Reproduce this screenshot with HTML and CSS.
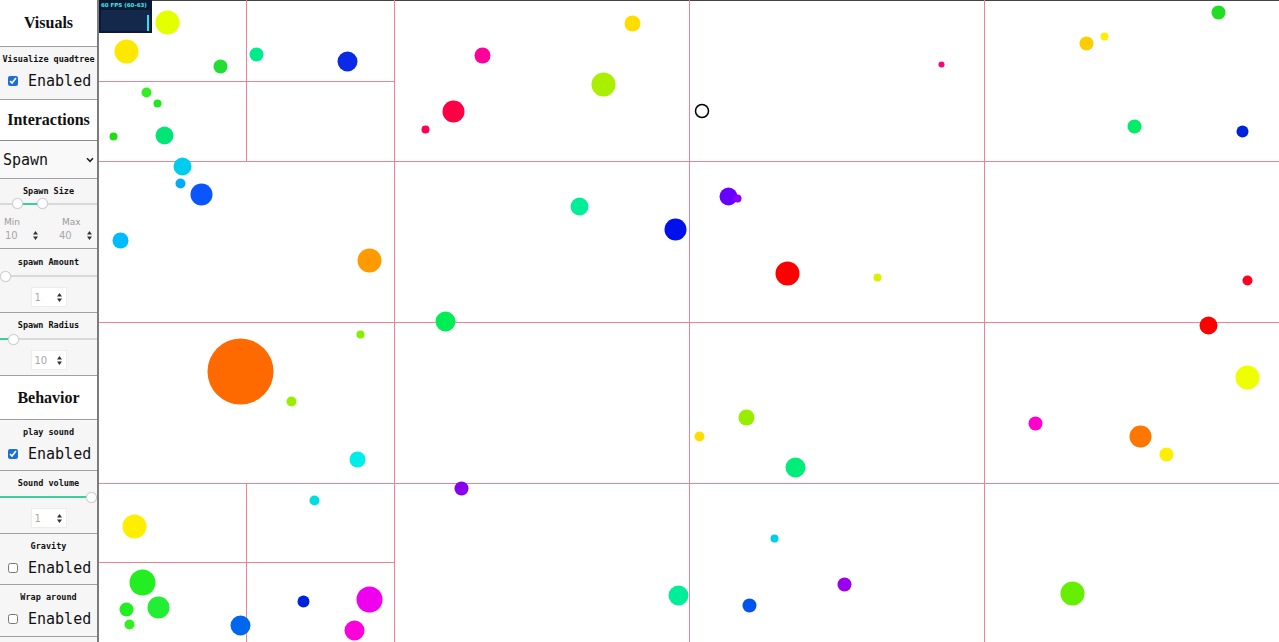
FILE: index.html
```html
<!DOCTYPE html>
<html lang="en">
<head>
<meta charset="utf-8">
<title>Quadtree playground</title>
<link rel="stylesheet" href="styles.css">
</head>
<body>
<div class="app">
  <aside class="panel">
    <h2 class="heading h-visuals">Visuals</h2>
    <section class="ctl ctl-check ctl-first">
      <div class="lbl">Visualize quadtree</div>
      <label class="chk"><input type="checkbox" checked> Enabled</label>
    </section>

    <h2 class="heading h-inter">Interactions</h2>
    <div class="selwrap">
      <select class="sel"><option>Spawn</option></select>
      <svg class="chev" width="8" height="6" viewBox="0 0 8 6"><path d="M1 1.2 L4 4.3 L7 1.2" fill="none" stroke="#222" stroke-width="1.6"/></svg>
    </div>

    <section class="ctl ctl-size">
      <div class="lbl">Spawn Size</div>
      <div class="dual">
        <div class="rail"><div class="rail-fill"></div></div>
        <span class="knob knob-a"></span>
        <span class="knob knob-b"></span>
      </div>
      <div class="mmcap"><span>Min</span><span>Max</span></div>
      <div class="mmrow">
        <div class="num num-wide"><span>10</span><svg width="5" height="9" viewBox="0 0 5 9"><path d="M2.5 0 L5 3.4 H0Z M0 5.6 H5 L2.5 9Z" fill="#333"/></svg></div>
        <div class="num num-wide"><span>40</span><svg width="5" height="9" viewBox="0 0 5 9"><path d="M2.5 0 L5 3.4 H0Z M0 5.6 H5 L2.5 9Z" fill="#333"/></svg></div>
      </div>
    </section>

    <section class="ctl ctl-range ctl-amount">
      <div class="lbl">spawn Amount</div>
      <input class="rng" type="range" min="0" max="100" value="0" style="--p:0%">
      <div class="numrow"><div class="num"><span>1</span><svg width="5" height="9" viewBox="0 0 5 9"><path d="M2.5 0 L5 3.4 H0Z M0 5.6 H5 L2.5 9Z" fill="#333"/></svg></div></div>
    </section>

    <section class="ctl ctl-range">
      <div class="lbl">Spawn Radius</div>
      <input class="rng" type="range" min="0" max="100" value="9" style="--p:13%">
      <div class="numrow"><div class="num"><span>10</span><svg width="5" height="9" viewBox="0 0 5 9"><path d="M2.5 0 L5 3.4 H0Z M0 5.6 H5 L2.5 9Z" fill="#333"/></svg></div></div>
    </section>

    <h2 class="heading h-beh">Behavior</h2>
    <section class="ctl ctl-check">
      <div class="lbl">play sound</div>
      <label class="chk"><input type="checkbox" checked> Enabled</label>
    </section>

    <section class="ctl ctl-range">
      <div class="lbl">Sound volume</div>
      <input class="rng" type="range" min="0" max="100" value="100" style="--p:100%">
      <div class="numrow"><div class="num"><span>1</span><svg width="5" height="9" viewBox="0 0 5 9"><path d="M2.5 0 L5 3.4 H0Z M0 5.6 H5 L2.5 9Z" fill="#333"/></svg></div></div>
    </section>

    <section class="ctl ctl-check">
      <div class="lbl">Gravity</div>
      <label class="chk"><input type="checkbox"> Enabled</label>
    </section>

    <section class="ctl ctl-check ctl-last">
      <div class="lbl">Wrap around</div>
      <label class="chk"><input type="checkbox"> Enabled</label>
    </section>
  </aside>

  <main class="stage">
    <svg class="world" width="1180" height="642" viewBox="99 0 1180 642">
      <g stroke="#ec8393" stroke-width="1" fill="none">
        <line x1="99" y1="0.5" x2="1279" y2="0.5" stroke="#444"/>
        <line x1="394.5" y1="0" x2="394.5" y2="642"/>
        <line x1="689.5" y1="0" x2="689.5" y2="642"/>
        <line x1="984.5" y1="0" x2="984.5" y2="642"/>
        <line x1="99" y1="161.5" x2="1279" y2="161.5"/>
        <line x1="99" y1="322.5" x2="1279" y2="322.5"/>
        <line x1="99" y1="483.5" x2="1279" y2="483.5"/>
        <line x1="246.5" y1="0" x2="246.5" y2="161"/>
        <line x1="99" y1="81.5" x2="394" y2="81.5"/>
        <line x1="246.5" y1="483" x2="246.5" y2="642"/>
        <line x1="99" y1="562.5" x2="394" y2="562.5"/>
      </g>
      <g transform="translate(0.5 0.5)">
        <circle cx="167" cy="22" r="12" fill="#e4ff00"/>
        <circle cx="126" cy="51" r="12" fill="#ffe800"/>
        <circle cx="220" cy="66" r="7" fill="#22dd33"/>
        <circle cx="256" cy="54" r="7" fill="#00ec8c"/>
        <circle cx="347" cy="61" r="10" fill="#0a2ae8"/>
        <circle cx="146" cy="92" r="5" fill="#33ee22"/>
        <circle cx="157" cy="103" r="4" fill="#22e622"/>
        <circle cx="113" cy="136" r="4" fill="#22dd11"/>
        <circle cx="164" cy="135" r="9" fill="#00e676"/>
        <circle cx="182" cy="166" r="9" fill="#00ccee"/>
        <circle cx="180" cy="183" r="5" fill="#00aaff"/>
        <circle cx="201" cy="194" r="11" fill="#0a55ff"/>
        <circle cx="120" cy="240" r="8" fill="#00bbff"/>
        <circle cx="369" cy="260" r="12" fill="#ff9a00"/>
        <circle cx="240" cy="371" r="33" fill="#ff6a00"/>
        <circle cx="360" cy="334" r="4" fill="#88ee00"/>
        <circle cx="291" cy="401" r="5" fill="#99ee00"/>
        <circle cx="357" cy="459" r="8" fill="#00eeea"/>
        <circle cx="314" cy="500" r="5" fill="#00dddd"/>
        <circle cx="134" cy="526" r="12" fill="#ffee00"/>
        <circle cx="142" cy="582" r="13" fill="#22ee22"/>
        <circle cx="158" cy="607" r="11" fill="#22ee33"/>
        <circle cx="126" cy="609" r="7" fill="#22ee22"/>
        <circle cx="129" cy="624" r="5" fill="#33ee22"/>
        <circle cx="240" cy="625" r="10" fill="#0066ee"/>
        <circle cx="303" cy="601" r="6" fill="#0022dd"/>
        <circle cx="369" cy="599" r="13" fill="#ee00ee"/>
        <circle cx="354" cy="630" r="10" fill="#ff00dd"/>
        <circle cx="445" cy="321" r="10" fill="#00ee55"/>
        <circle cx="482" cy="55" r="8" fill="#ff0099"/>
        <circle cx="453" cy="111" r="11" fill="#ff0044"/>
        <circle cx="425" cy="129" r="4" fill="#ff0055"/>
        <circle cx="632" cy="23" r="8" fill="#ffdd00"/>
        <circle cx="603" cy="84" r="12" fill="#aaee00"/>
        <circle cx="579" cy="206" r="9" fill="#00ee99"/>
        <circle cx="675" cy="229" r="11" fill="#0011ee"/>
        <circle cx="728" cy="196" r="9" fill="#6600ff"/>
        <circle cx="737" cy="198" r="4" fill="#8800ff"/>
        <circle cx="787" cy="273" r="12" fill="#ff0000"/>
        <circle cx="877" cy="277" r="4" fill="#ddee00"/>
        <circle cx="941" cy="64" r="3" fill="#ff0077"/>
        <circle cx="461" cy="488" r="7" fill="#8800ee"/>
        <circle cx="699" cy="436" r="5" fill="#ffdd00"/>
        <circle cx="746" cy="417" r="8" fill="#99ee00"/>
        <circle cx="795" cy="467" r="10" fill="#00ee77"/>
        <circle cx="774" cy="538" r="4" fill="#00ccee"/>
        <circle cx="678" cy="595" r="10" fill="#00ee99"/>
        <circle cx="749" cy="605" r="7" fill="#0055ee"/>
        <circle cx="844" cy="584" r="7" fill="#9900ee"/>
        <circle cx="1218" cy="12" r="7" fill="#22dd22"/>
        <circle cx="1086" cy="43" r="7" fill="#ffcc00"/>
        <circle cx="1104" cy="36" r="4" fill="#ffee00"/>
        <circle cx="1134" cy="126" r="7" fill="#00ee66"/>
        <circle cx="1242" cy="131" r="6" fill="#0022dd"/>
        <circle cx="1247" cy="280" r="5" fill="#ff0022"/>
        <circle cx="1208" cy="325" r="9" fill="#ff0000"/>
        <circle cx="1247" cy="377" r="12" fill="#eeff00"/>
        <circle cx="1035" cy="423" r="7" fill="#ff00cc"/>
        <circle cx="1140" cy="436" r="11" fill="#ff7700"/>
        <circle cx="1166" cy="454" r="7" fill="#ffee00"/>
        <circle cx="1072" cy="593" r="12" fill="#66ee00"/>
        <circle cx="701.5" cy="110.5" r="6.5" fill="none" stroke="#000" stroke-width="1.5"/>
      </g>
    </svg>
    <div class="fps">
      <div class="fps-txt">60 FPS (60-63)</div>
      <div class="fps-graph"><span class="fps-bar"></span></div>
    </div>
  </main>
</div>
</body>
</html>
```

FILE: styles.css
```css
html, body {
  margin: 0;
  padding: 0;
  background: #fff;
  overflow: hidden;
}

body {
  font-family: "DejaVu Sans", sans-serif;
  color: #111;
}

.app {
  display: flex;
  height: 642px;
}

/* ---------- side panel ---------- */
.panel {
  width: 97px;
  flex: none;
  display: flex;
  flex-direction: column;
  background: #f6f6f6;
  border-right: 2px solid #7c7c7c;
}

.heading {
  margin: 0;
  display: flex;
  align-items: center;
  justify-content: center;
  font: bold 16px "Liberation Serif", serif;
  color: #111;
  background: #fff;
  border-top: 1px solid #a0a0a0;
}

.h-visuals { height: 46px; border-top: none; }
.h-inter { height: 40px; }
.h-beh { height: 43px; }

.ctl {
  display: flex;
  flex-direction: column;
  border-top: 1px solid #a0a0a0;
  padding-top: 6px;
}

.ctl-check { padding-bottom: 4px; }
.ctl-first { padding-bottom: 6px; }
.ctl-last { padding-bottom: 5px; border-bottom: 1px solid #a0a0a0; }
.ctl-range { padding-bottom: 5px; }
.ctl-amount { padding-top: 7px; }
.ctl-size { padding-bottom: 5px; }

.lbl {
  height: 12px;
  font: bold 8.5px/12px "DejaVu Sans Mono", monospace;
  text-align: center;
  color: #111;
  white-space: nowrap;
}

.chk {
  display: flex;
  align-items: center;
  gap: 10px;
  height: 24px;
  margin-top: 4px;
  padding-left: 8px;
  font: 15px "DejaVu Sans Mono", monospace;
  color: #111;
}

.chk input {
  width: 10px;
  height: 10px;
  margin: 0;
  accent-color: #1c6fd6;
}

/* select */
.selwrap {
  position: relative;
  height: 37px;
  border-top: 1px solid #8a8a8a;
  background: #f9f9f9;
}

.sel {
  -webkit-appearance: none;
  appearance: none;
  width: 100%;
  height: 100%;
  margin: 0;
  padding: 0 0 0 3px;
  border: none;
  background: transparent;
  font: 15px "DejaVu Sans Mono", monospace;
  color: #111;
}

.chev {
  position: absolute;
  right: 3px;
  top: 16px;
  pointer-events: none;
}

/* ranges */
.rng {
  -webkit-appearance: none;
  appearance: none;
  display: block;
  width: 100%;
  height: 12px;
  margin: 2px 0 0;
  background: transparent;
}

.rng::-webkit-slider-runnable-track {
  height: 2px;
  background: linear-gradient(to right, #3ccf9c var(--p), #d9d9d9 var(--p));
}

.rng::-webkit-slider-thumb {
  -webkit-appearance: none;
  box-sizing: border-box;
  width: 11px;
  height: 11px;
  margin-top: -4.5px;
  border-radius: 50%;
  background: #fff;
  border: 1px solid #cfcfcf;
  box-shadow: 0 0 1px rgba(0, 0, 0, 0.15);
}

.dual {
  position: relative;
  height: 12px;
  margin-top: 1px;
}

.rail {
  position: relative;
  top: 5px;
  height: 2px;
  background: #d9d9d9;
}

.rail-fill {
  margin-left: 17px;
  width: 25px;
  height: 2px;
  background: #3ccf9c;
}

.knob {
  position: absolute;
  top: 0;
  box-sizing: border-box;
  width: 11px;
  height: 11px;
  border-radius: 50%;
  background: #fff;
  border: 1px solid #cfcfcf;
  box-shadow: 0 0 1px rgba(0, 0, 0, 0.15);
}

.knob-a { left: 12px; }
.knob-b { left: 37px; }

.mmcap {
  display: flex;
  height: 10px;
  margin-top: 7px;
  font: 9px/10px "DejaVu Sans", sans-serif;
  color: #9a9a9a;
}

.mmcap span { width: 54px; padding-left: 4px; }
.mmcap span + span { width: auto; padding-left: 4px; }

.mmrow {
  display: flex;
  gap: 16px;
  height: 16px;
  margin-top: 0;
  padding-left: 2px;
}

.numrow {
  display: flex;
  justify-content: center;
  height: 20px;
  margin-top: 5px;
}

.num {
  box-sizing: border-box;
  width: 36px;
  display: flex;
  align-items: center;
  justify-content: space-between;
  padding: 0 4px 0 3px;
  background: #fff;
  border: 1px solid #ececec;
  font: 10px "DejaVu Sans", sans-serif;
  color: #a8a8a8;
}

.num-wide {
  width: 38px;
  border: none;
  background: transparent;
  padding: 0 2px 0 3px;
}

/* ---------- stage ---------- */
.stage {
  position: relative;
  flex: 1;
  height: 642px;
  overflow: hidden;
  background: #fff;
}

.world {
  display: block;
}

.fps {
  position: absolute;
  top: 0;
  left: 0;
  width: 53px;
  height: 33px;
  box-sizing: border-box;
  padding: 1px 2px 2px;
  background: #0b1934;
  display: flex;
  flex-direction: column;
}

.fps-txt {
  height: 8px;
  font: bold 5.5px/8px "DejaVu Sans", sans-serif;
  color: #3ee8f0;
  white-space: nowrap;
}

.fps-graph {
  flex: 1;
  margin-top: 1px;
  background: #13284a;
  display: flex;
  justify-content: flex-end;
  align-items: flex-end;
}

.fps-bar {
  width: 2px;
  height: 16px;
  margin-right: 1px;
  background: #27e3f5;
}
```
